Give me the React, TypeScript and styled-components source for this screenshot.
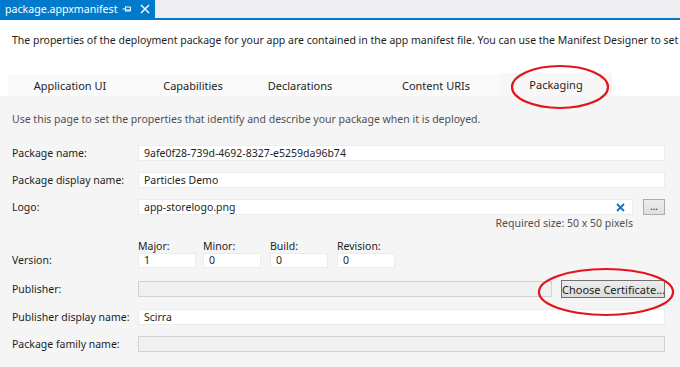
import React from "react";
import styled, { createGlobalStyle } from "styled-components";

const GlobalStyle = createGlobalStyle`
  html, body {
    margin: 0;
    padding: 0;
    background: #ffffff;
  }
  body {
    font-family: "Noto Sans", "Open Sans", sans-serif;
    font-size: 10.5px;
    color: #1e1e1e;
    width: 680px;
    height: 367px;
    overflow: hidden;
  }
`;

const Page = styled.div`
  position: relative;
  width: 680px;
  height: 367px;
  display: flex;
  flex-direction: column;
  overflow: hidden;
`;

const DocTabStrip = styled.div`
  height: 18px;
  background: #eeeef2;
  border-bottom: 2px solid #007acc;
  display: flex;
  flex-shrink: 0;
`;

const DocTab = styled.div`
  width: 155px;
  height: 18px;
  background: #007acc;
  color: #ffffff;
  display: flex;
  align-items: center;
  padding-left: 5px;
  box-sizing: border-box;
  font-size: 10.6px;
`;

const DocTabTitle = styled.span`
  width: 113px;
  white-space: nowrap;
`;

const TabIcon = styled.span`
  display: flex;
  align-items: center;
  justify-content: center;
  width: 18px;
  height: 18px;
`;

const Intro = styled.div`
  height: 53px;
  padding: 13px 0 0 12px;
  box-sizing: border-box;
  white-space: nowrap;
  flex-shrink: 0;
`;

const TabRow = styled.div`
  height: 23px;
  display: flex;
  padding-left: 8px;
  background: #ffffff;
  flex-shrink: 0;
`;

const DesignerTab = styled.div<{ $width: number; $shift?: number; $active?: boolean }>`
  width: ${(p) => p.$width}px;
  height: ${(p) => (p.$active ? 23 : 21)}px;
  box-sizing: border-box;
  padding-left: ${(p) => p.$shift ?? 0}px;
  display: flex;
  align-items: center;
  justify-content: center;
  background: ${(p) => (p.$active ? "#f7f7f7" : "#fafafa")};
  margin-top: ${(p) => (p.$active ? 0 : 2)}px;
  color: #1e1e1e;
  font-size: 11px;
  white-space: nowrap;
`;

const Content = styled.div`
  flex: 1;
  background: #f5f5f5;
  padding: 16px 15px 0 12px;
  display: flex;
  flex-direction: column;
`;

const Hint = styled.div`
  color: #505050;
  margin-bottom: 19px;
  white-space: nowrap;
`;

const Row = styled.div<{ $gap?: number }>`
  display: flex;
  align-items: center;
  height: 16px;
  margin-bottom: ${(p) => p.$gap ?? 11}px;
`;

const Label = styled.div`
  width: 126px;
  flex-shrink: 0;
  white-space: nowrap;
`;

const TextBox = styled.div<{ $disabled?: boolean }>`
  flex: 1;
  height: 16px;
  box-sizing: border-box;
  background: ${(p) => (p.$disabled ? "#f0f0f0" : "#ffffff")};
  border: 1px solid ${(p) => (p.$disabled ? "#d2d2d2" : "#ececec")};
  display: flex;
  align-items: center;
  padding: 0 5px;
  line-height: 14px;
  white-space: nowrap;
  overflow: hidden;
`;

const BoxText = styled.span`
  flex: 1;
`;

const ClearIcon = styled.span`
  display: flex;
  align-items: center;
  margin-right: 2px;
`;

const SmallButton = styled.button`
  width: 22px;
  height: 16px;
  margin-left: 10px;
  padding: 0 0 3px;
  box-sizing: border-box;
  border: 1px solid #acacac;
  background: linear-gradient(#ececec, #e0e0e0);
  font-family: inherit;
  font-size: 10px;
  color: #1e1e1e;
  display: flex;
  align-items: center;
  justify-content: center;
`;

const CertButton = styled.button`
  width: 104px;
  height: 18px;
  margin-left: 9px;
  padding: 0;
  box-sizing: border-box;
  border: 1px solid #707070;
  background: linear-gradient(#ececec, #dcdcdc);
  font-family: inherit;
  font-size: 11px;
  color: #1e1e1e;
  white-space: nowrap;
`;

const RequiredNote = styled.div`
  width: 621px;
  text-align: right;
  color: #505050;
  margin-top: 1px;
  margin-bottom: 9px;
`;

const VersionRow = styled.div`
  display: flex;
  align-items: flex-end;
  margin-bottom: 13px;
`;

const VersionLabel = styled(Label)`
  height: 16px;
  display: flex;
  align-items: center;
`;

const VersionFields = styled.div`
  display: flex;
`;

const VersionField = styled.div<{ $gapAfter: number }>`
  display: flex;
  flex-direction: column;
  margin-right: ${(p) => p.$gapAfter}px;
`;

const VersionCaption = styled.div`
  height: 14px;
  line-height: 14px;
`;

const VersionBox = styled.div`
  width: 58px;
  height: 15px;
  box-sizing: border-box;
  background: #ffffff;
  border: 1px solid #ececec;
  padding: 0 5px;
  line-height: 13px;
  display: flex;
  align-items: center;
`;

const Overlay = styled.svg`
  position: absolute;
  left: 0;
  top: 0;
  pointer-events: none;
`;

const tabs = [
  { label: "Application UI", width: 124 },
  { label: "Capabilities", width: 122 },
  { label: "Declarations", width: 92 },
  { label: "Content URIs", width: 154, shift: 26 },
  { label: "Packaging", width: 112, active: true },
];

const versions = [
  { caption: "Major:", value: "1", gap: 7 },
  { caption: "Minor:", value: "0", gap: 9 },
  { caption: "Build:", value: "0", gap: 9 },
  { caption: "Revision:", value: "0", gap: 0 },
];

export default function App() {
  return (
    <Page>
      <GlobalStyle />
      <DocTabStrip>
        <DocTab>
          <DocTabTitle>package.appxmanifest</DocTabTitle>
          <TabIcon>
            <svg width="10" height="8" viewBox="0 0 10 8">
              <path d="M0.5 4 H3.5 M3.5 1.5 V6.5 M3.5 2 H8.5 V6 H3.5 M3.5 5 H8.5" stroke="#ffffff" strokeWidth="1" fill="none" />
            </svg>
          </TabIcon>
          <TabIcon>
            <svg width="10" height="10" viewBox="0 0 10 10">
              <path d="M1 1 L9 9 M9 1 L1 9" stroke="#ffffff" strokeWidth="1.4" />
            </svg>
          </TabIcon>
        </DocTab>
      </DocTabStrip>
      <Intro>
        The properties of the deployment package for your app are contained in the app manifest file. You can use the Manifest Designer to set
      </Intro>
      <TabRow>
        {tabs.map((t) => (
          <DesignerTab key={t.label} $width={t.width} $shift={t.shift} $active={t.active}>
            {t.label}
          </DesignerTab>
        ))}
      </TabRow>
      <Content>
        <Hint>Use this page to set the properties that identify and describe your package when it is deployed.</Hint>
        <Row>
          <Label>Package name:</Label>
          <TextBox>9afe0f28-739d-4692-8327-e5259da96b74</TextBox>
        </Row>
        <Row>
          <Label>Package display name:</Label>
          <TextBox>Particles Demo</TextBox>
        </Row>
        <Row $gap={0}>
          <Label>Logo:</Label>
          <TextBox>
            <BoxText>app-storelogo.png</BoxText>
            <ClearIcon>
              <svg width="9" height="9" viewBox="0 0 9 9">
                <path d="M1 1 L8 8 M8 1 L1 8" stroke="#1c6fc0" strokeWidth="1.8" />
              </svg>
            </ClearIcon>
          </TextBox>
          <SmallButton>...</SmallButton>
        </Row>
        <RequiredNote>Required size: 50 x 50 pixels</RequiredNote>
        <VersionRow>
          <VersionLabel>Version:</VersionLabel>
          <VersionFields>
            {versions.map((v) => (
              <VersionField key={v.caption} $gapAfter={v.gap}>
                <VersionCaption>{v.caption}</VersionCaption>
                <VersionBox>{v.value}</VersionBox>
              </VersionField>
            ))}
          </VersionFields>
        </VersionRow>
        <Row $gap={12}>
          <Label>Publisher:</Label>
          <TextBox $disabled />
          <CertButton>Choose Certificate...</CertButton>
        </Row>
        <Row>
          <Label>Publisher display name:</Label>
          <TextBox>Scirra</TextBox>
        </Row>
        <Row>
          <Label>Package family name:</Label>
          <TextBox $disabled />
        </Row>
      </Content>
      <Overlay width="680" height="367" viewBox="0 0 680 367">
        <ellipse cx="560" cy="87" rx="48" ry="21" fill="none" stroke="#e3141c" strokeWidth="2.2" />
        <ellipse cx="606" cy="292" rx="67" ry="23" fill="none" stroke="#e3141c" strokeWidth="2.2" />
      </Overlay>
    </Page>
  );
}
